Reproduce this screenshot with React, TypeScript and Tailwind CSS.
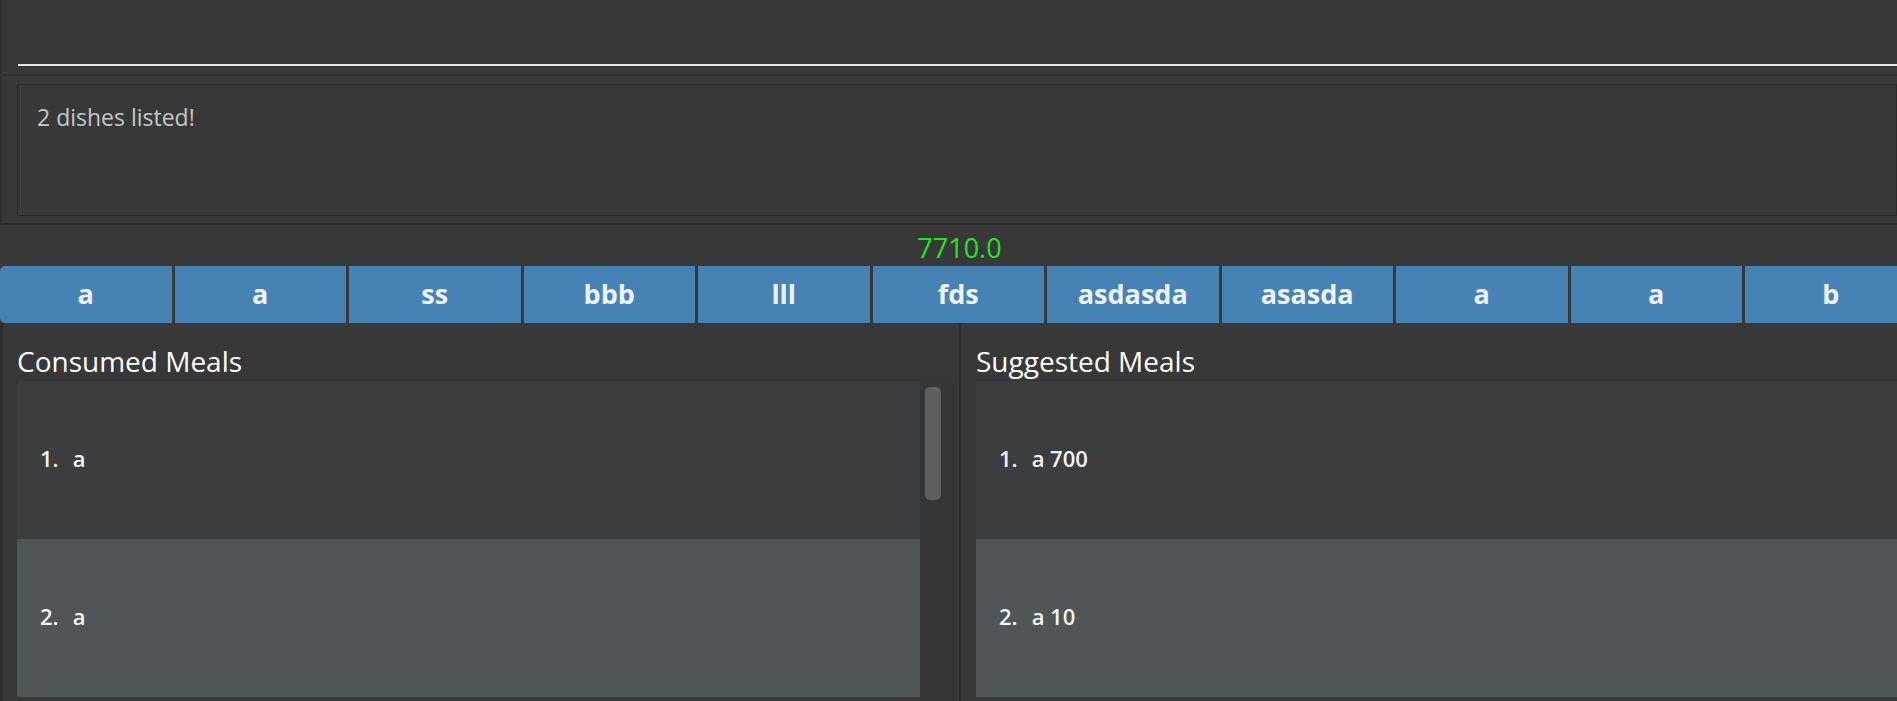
import React from "react";

const categories = ["a", "a", "ss", "bbb", "lll", "fds", "asdasda", "asasda", "a", "a", "b"];

const consumed = [{ id: 1, name: "a" }, { id: 2, name: "a" }];
const suggested = [{ id: 1, name: "a 700" }, { id: 2, name: "a 10" }];

const font = { fontFamily: '"Segoe UI", "Open Sans", "Noto Sans", sans-serif' };

const MealRow = ({ index, label }: { index: number; label: string }) => (
  <div
    className={`h-[158px] shrink-0 flex items-center pl-[23px] pb-[3px] text-[22px] font-semibold text-[#f3f3f3] ${
      index % 2 === 1 ? "bg-[#3c3d3f]" : "bg-[#505558]"
    }`}
  >
    <span>{index}.</span>
    <span className="ml-[14px]">{label}</span>
  </div>
);

export default function App() {
  return (
    <div className="w-[1897px] h-[701px] overflow-hidden bg-[#383838] flex flex-col" style={font}>
      {/* command box */}
      <div className="h-[76px] shrink-0 border-l-2 border-b-2 border-[#2f2f2f] pl-[16px] pt-[20px]">
        <div className="h-[46px] border-b-2 border-[#e8e8e8]" />
      </div>

      {/* result display */}
      <div className="h-[149px] shrink-0 border-l-2 border-b-2 border-[#2f2f2f] pl-[15px] pt-[8px] pb-[7px]">
        <div className="h-full border border-[#2a2a2a] pl-[19px] pt-[17px] text-[23px] leading-[30px] text-[#c4c8cc]">
          2 dishes listed!
        </div>
      </div>

      {/* calorie total */}
      <div className="h-[41px] shrink-0 flex justify-center items-end pl-[22px] text-[27px] leading-none text-[#1ee81e] pb-[5px]">
        7710.0
      </div>

      {/* category tabs */}
      <div className="h-[57px] shrink-0 flex gap-[3px] overflow-hidden">
        {categories.map((c, i) => (
          <div
            key={i}
            className={`w-[171.5px] shrink-0 h-full bg-[#4682b4] flex items-center justify-center text-[27px] font-bold text-[#eef2f6] ${
              i === 0 ? "rounded-l-[5px]" : ""
            }`}
          >
            {c}
          </div>
        ))}
      </div>

      {/* meal lists */}
      <div className="flex-1 flex min-h-0">
        <div className="w-[961px] shrink-0 flex flex-col border-l-[3px] border-r-2 border-[#2d2d2d] pl-[14px]">
          <div className="h-[58px] shrink-0 flex items-end pb-[2px] text-[28px] leading-none text-white">
            <span className="pb-[4px]">Consumed Meals</span>
          </div>
          <div className="flex-1 flex min-h-0">
            <div className="w-[903px] shrink-0 flex flex-col">
              {consumed.map((m) => (
                <MealRow key={m.id} index={m.id} label={m.name} />
              ))}
            </div>
            <div className="flex-1 bg-[#363636] pt-[6px] pl-[5px]">
              <div className="w-[16px] h-[113px] rounded-[5px] bg-[#5f5f5f]" />
            </div>
          </div>
        </div>
        <div className="flex-1 flex flex-col pl-[15px] min-w-0">
          <div className="h-[58px] shrink-0 flex items-end pb-[2px] text-[28px] leading-none text-white">
            <span className="pb-[4px]">Suggested Meals</span>
          </div>
          <div className="flex-1 flex flex-col min-h-0">
            {suggested.map((m) => (
              <MealRow key={m.id} index={m.id} label={m.name} />
            ))}
          </div>
        </div>
      </div>
    </div>
  );
}
